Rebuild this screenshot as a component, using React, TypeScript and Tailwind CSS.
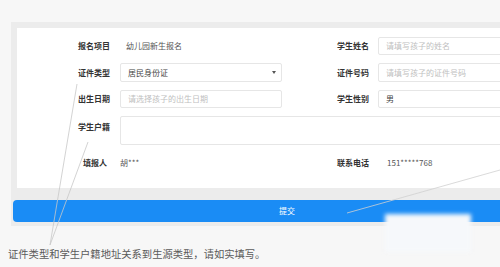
import React from "react";

const font = { fontFamily: '"Noto Sans CJK SC", "Noto Sans", sans-serif' };

function Label({ children, pr = "pr-[10px]" }: { children: React.ReactNode; pr?: string }) {
  return (
    <div className={`w-[42px] shrink-0 text-right text-[8px] font-semibold text-[#333] ${pr} whitespace-nowrap`}>{children}</div>
  );
}

function RLabel({ children }: { children: React.ReactNode }) {
  return <div className="w-[41px] shrink-0 text-[8px] font-semibold text-[#333] whitespace-nowrap">{children}</div>;
}

function Input({ text, placeholder, h = "h-[18px]", w = "w-[162px]" }: { text?: string; placeholder?: string; h?: string; w?: string }) {
  return (
    <div className={`${w} ${h} shrink-0 border border-[#e6e6e6] rounded-[2px] bg-white flex items-center px-[7px] text-[8px] whitespace-nowrap`}>
      {text ? <span className="text-[#444]">{text}</span> : <span className="text-[#c0c0c0]">{placeholder}</span>}
    </div>
  );
}

export default function App() {
  return (
    <div className="relative w-[500px] h-[267px] overflow-hidden bg-[#f7f7f7]" style={font}>
      <div className="pt-[22px] pl-[11px]">
        <div className="w-[600px] bg-[#ececec] pt-[6px] pl-[6px] pb-[4px]">
          <div className="bg-white h-[160px] pt-[9px] pl-[61px] flex flex-col">
            {/* Row 1 */}
            <div className="flex items-center h-[18px]">
              <Label>报名项目</Label>
              <div className="w-[162px] shrink-0 pl-[6px] text-[8px] text-[#555]">幼儿园新生报名</div>
              <div className="w-[55px] shrink-0" />
              <RLabel>学生姓名</RLabel>
              <Input placeholder="请填写孩子的姓名" w="w-[200px]" />
            </div>
            {/* Row 2 */}
            <div className="flex items-center h-[19px] mt-[8px]">
              <Label>证件类型</Label>
              <div className="w-[162px] h-[19px] shrink-0 border border-[#e6e6e6] rounded-[2px] flex items-center justify-between pl-[7px] pr-[5px] text-[8px]">
                <span className="text-[#444]">居民身份证</span>
                <svg width="4" height="3" viewBox="0 0 4 3">
                  <path d="M0 0 L4 0 L2 3 Z" fill="#555" />
                </svg>
              </div>
              <div className="w-[55px] shrink-0" />
              <RLabel>证件号码</RLabel>
              <Input placeholder="请填写孩子的证件号码" w="w-[200px]" h="h-[19px]" />
            </div>
            {/* Row 3 */}
            <div className="flex items-center h-[18px] mt-[8px]">
              <Label>出生日期</Label>
              <Input placeholder="请选择孩子的出生日期" />
              <div className="w-[55px] shrink-0" />
              <RLabel>学生性别</RLabel>
              <Input text="男" w="w-[200px]" />
            </div>
            {/* Row 4 */}
            <div className="flex items-start h-[29px] mt-[8px]">
              <div className="pt-[5px]">
                <Label>学生户籍</Label>
              </div>
              <div className="w-[420px] h-[29px] border border-[#e6e6e6] rounded-[2px]" />
            </div>
            {/* Row 5 */}
            <div className="flex items-center h-[18px] mt-[9px]">
              <Label pr="pr-[13px]">填报人</Label>
              <div className="w-[162px] shrink-0 text-[8px] text-[#555]">胡***</div>
              <div className="w-[55px] shrink-0" />
              <RLabel>联系电话</RLabel>
              <div className="pl-[9px] text-[8px] text-[#555]">151*****768</div>
            </div>
          </div>
          <div className="mt-[12px] -ml-[4px] w-[548px] h-[22px] rounded-[4px] bg-[#1a8cf5] flex items-center justify-center text-[8px] text-white">
            提交
          </div>
        </div>
        <div className="mt-[20px] -ml-[3px] text-[10.3px] text-[#5a5a5a] whitespace-nowrap">
          证件类型和学生户籍地址关系到生源类型，请如实填写。
        </div>
      </div>

      <svg className="absolute inset-0 pointer-events-none" width="500" height="267" viewBox="0 0 500 267">
        <line x1="50" y1="245" x2="77" y2="84" stroke="#c8c8c8" strokeWidth="0.8" />
        <line x1="50" y1="245" x2="88" y2="142" stroke="#c8c8c8" strokeWidth="0.8" />
        <line x1="347" y1="213" x2="500" y2="170" stroke="#d0d0d0" strokeWidth="0.8" />
      </svg>

      <div className="absolute left-[385px] top-[214px] w-[86px] h-[38px] bg-[#f6f8fb] blur-[2px]" />
    </div>
  );
}
